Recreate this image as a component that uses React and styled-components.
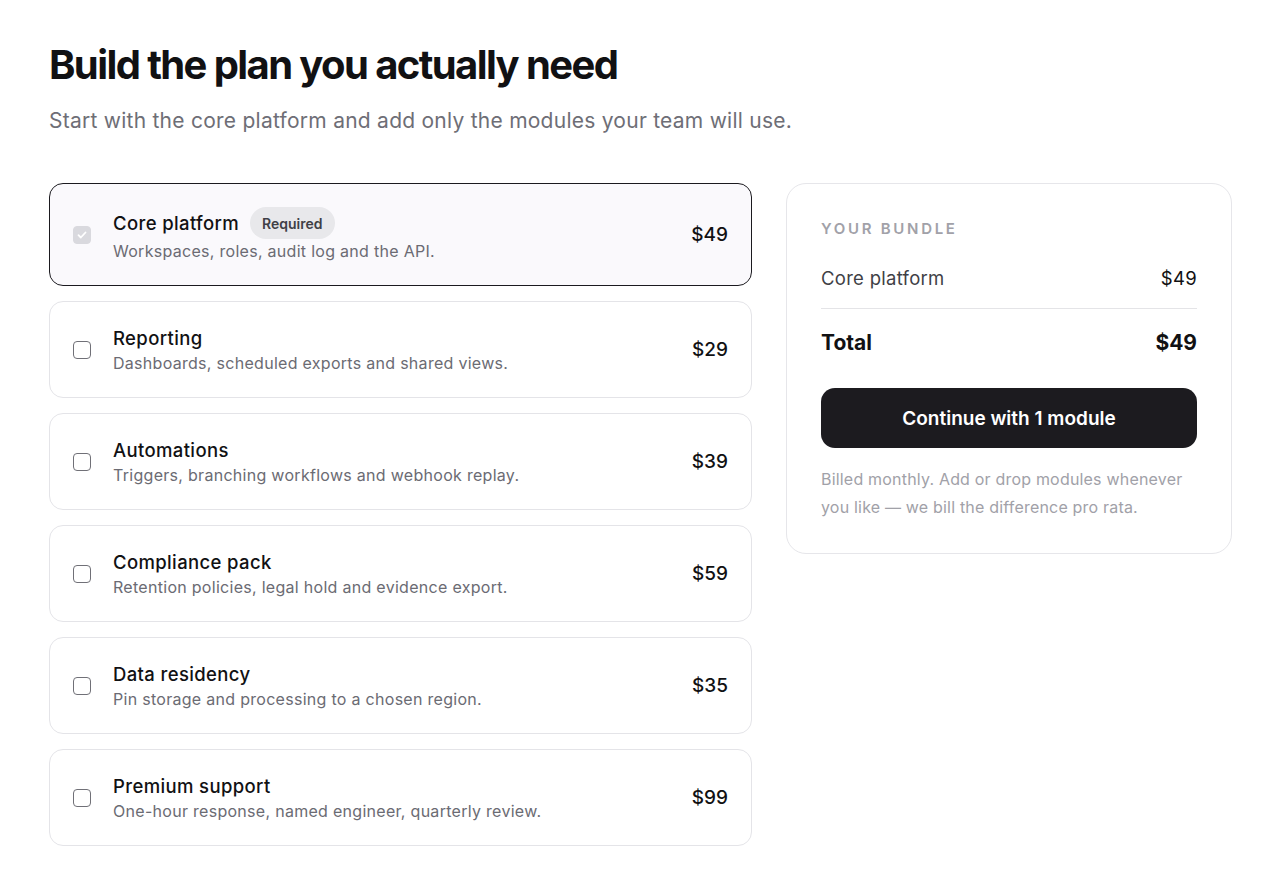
import React, { useState } from "react";
import styled, { createGlobalStyle } from "styled-components";

const GlobalStyle = createGlobalStyle`
  * {
    box-sizing: border-box;
  }
  body {
    margin: 0;
    background: #ffffff;
    font-family: Inter, "Noto Sans", "Liberation Sans", sans-serif;
    color: #111113;
    -webkit-font-smoothing: antialiased;
  }
`;

const modules = [
  { id: "core", name: "Core platform", desc: "Workspaces, roles, audit log and the API.", price: 49, required: true },
  { id: "reporting", name: "Reporting", desc: "Dashboards, scheduled exports and shared views.", price: 29 },
  { id: "automations", name: "Automations", desc: "Triggers, branching workflows and webhook replay.", price: 39 },
  { id: "compliance", name: "Compliance pack", desc: "Retention policies, legal hold and evidence export.", price: 59 },
  { id: "residency", name: "Data residency", desc: "Pin storage and processing to a chosen region.", price: 35 },
  { id: "support", name: "Premium support", desc: "One-hour response, named engineer, quarterly review.", price: 99 },
];

const App = () => {
  const [picked, setPicked] = useState({ core: true });

  const toggle = (m) => {
    if (m.required) return;
    setPicked((p) => ({ ...p, [m.id]: !p[m.id] }));
  };

  const chosen = modules.filter((m) => picked[m.id]);
  const total = chosen.reduce((sum, m) => sum + m.price, 0);

  return (
    <>
      <GlobalStyle />
      <Page>
        <Title>Build the plan you actually need</Title>
        <Lead>Start with the core platform and add only the modules your team will use.</Lead>
        <Layout>
          <List>
            {modules.map((m) => (
              <Card key={m.id} $selected={m.required} onClick={() => toggle(m)}>
                <Check $checked={!!picked[m.id]} $disabled={m.required}>
                  {picked[m.id] && (
                    <svg width="12" height="12" viewBox="0 0 12 12" fill="none">
                      <path d="M2.5 6.2l2.3 2.3 4.7-5" stroke="#fff" strokeWidth="1.8" strokeLinecap="round" strokeLinejoin="round" />
                    </svg>
                  )}
                </Check>
                <Info>
                  <NameLine>
                    <Name>{m.name}</Name>
                    {m.required && <Badge>Required</Badge>}
                  </NameLine>
                  <Desc>{m.desc}</Desc>
                </Info>
                <Price>${m.price}</Price>
              </Card>
            ))}
          </List>

          <Summary>
            <Label>Your bundle</Label>
            {chosen.map((m) => (
              <Line key={m.id}>
                <span>{m.name}</span>
                <strong>${m.price}</strong>
              </Line>
            ))}
            <TotalLine>
              <span>Total</span>
              <span>${total}</span>
            </TotalLine>
            <Button>
              Continue with {chosen.length} module{chosen.length === 1 ? "" : "s"}
            </Button>
            <Note>
              Billed monthly. Add or drop modules whenever you like — we bill the difference pro rata.
            </Note>
          </Summary>
        </Layout>
      </Page>
    </>
  );
};

const Page = styled.div`
  padding: 38px 48px 40px 49px;
`;

const Title = styled.h1`
  margin: 0;
  font-size: 40px;
  line-height: 54px;
  font-weight: 700;
  letter-spacing: -0.04em;
  color: #111113;
`;

const Lead = styled.p`
  margin: 14px 0 0;
  font-size: 21px;
  line-height: 30px;
  letter-spacing: 0.012em;
  color: #6e6e76;
`;

const Layout = styled.div`
  margin-top: 47px;
  display: grid;
  grid-template-columns: 703px 446px;
  gap: 34px;
  align-items: start;
`;

const List = styled.div`
  display: flex;
  flex-direction: column;
  gap: 15px;
`;

const Card = styled.div`
  display: flex;
  align-items: center;
  padding: 23px 23px;
  border-radius: 14px;
  border: ${(p) => (p.$selected ? "1.5px solid #1b1a1f" : "1px solid #e4e4e8")};
  background: ${(p) => (p.$selected ? "#faf9fc" : "#ffffff")};
  cursor: pointer;
`;

const Check = styled.span`
  flex: none;
  width: 18px;
  height: 18px;
  border-radius: 4px;
  display: flex;
  align-items: center;
  justify-content: center;
  border: 1.5px solid ${(p) => (p.$disabled ? "#d9d9de" : p.$checked ? "#1b1a1f" : "#707077")};
  background: ${(p) => (p.$disabled ? "#d9d9de" : p.$checked ? "#1b1a1f" : "#ffffff")};
`;

const Info = styled.div`
  flex: 1;
  margin-left: 22px;
  display: flex;
  flex-direction: column;
  gap: 1px;
`;

const NameLine = styled.div`
  display: flex;
  align-items: center;
  gap: 11px;
`;

const Name = styled.span`
  font-size: 18.5px;
  line-height: 26px;
  font-weight: 500;
  letter-spacing: 0.02em;
  color: #111113;
`;

const Badge = styled.span`
  display: inline-flex;
  align-items: center;
  height: 32px;
  padding: 0 12px;
  border-radius: 16px;
  background: #e8e8eb;
  color: #3f3f46;
  font-size: 14px;
  font-weight: 600;
`;

const Desc = styled.span`
  font-size: 16px;
  line-height: 22px;
  letter-spacing: 0.018em;
  color: #6b6b73;
`;

const Price = styled.span`
  flex: none;
  font-size: 19px;
  font-weight: 500;
  color: #111113;
`;

const Summary = styled.aside`
  border: 1px solid #e6e6ea;
  border-radius: 20px;
  padding: 35px 34px 32px;
  display: flex;
  flex-direction: column;
`;

const Label = styled.div`
  font-size: 15px;
  line-height: 20px;
  font-weight: 600;
  letter-spacing: 0.18em;
  text-transform: uppercase;
  color: #a1a1a8;
`;

const Line = styled.div`
  margin-top: 26px;
  padding-bottom: 17px;
  border-bottom: 1px solid #e4e4e7;
  display: flex;
  justify-content: space-between;
  font-size: 18.5px;
  line-height: 26px;
  letter-spacing: 0.015em;
  color: #3f3f46;

  strong {
    font-weight: 400;
    color: #111113;
  }
`;

const TotalLine = styled.div`
  margin-top: 20px;
  display: flex;
  justify-content: space-between;
  font-size: 21px;
  line-height: 28px;
  font-weight: 700;
  color: #111113;
`;

const Button = styled.button`
  margin-top: 31px;
  height: 60px;
  border: none;
  border-radius: 14px;
  background: #1c1b1f;
  color: #ffffff;
  font-family: inherit;
  font-size: 19px;
  font-weight: 600;
  cursor: pointer;
`;

const Note = styled.p`
  margin: 17px 0 0;
  font-size: 16px;
  line-height: 28px;
  letter-spacing: 0.012em;
  color: #a1a1a8;
`;

export default App;
